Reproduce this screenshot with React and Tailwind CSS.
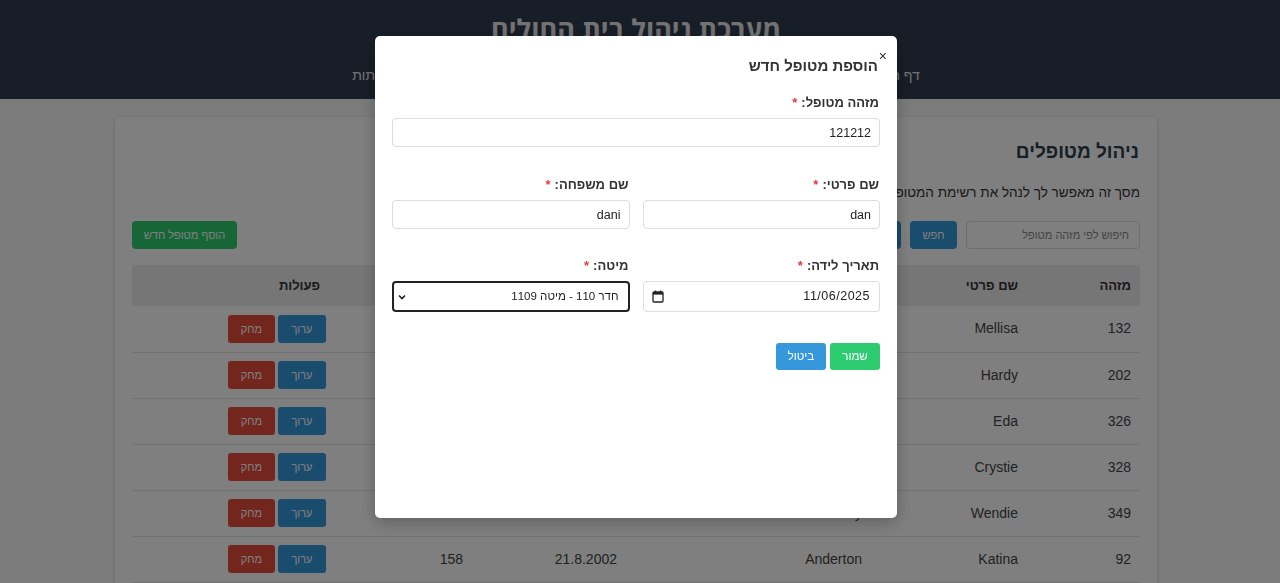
import React from "react";

const rows = [
  { id: 132, first: "Mellisa", last: "Gilbert", dob: "3.4.1985", bed: "101" },
  { id: 202, first: "Hardy", last: "Mason", dob: "17.9.1990", bed: "114" },
  { id: 326, first: "Eda", last: "Hollis", dob: "9.1.1978", bed: "122" },
  { id: 328, first: "Crystie", last: "Warner", dob: "28.5.1966", bed: "130" },
  { id: 349, first: "Wendie", last: "Kennedy", dob: "12.12.1999", bed: "143" },
  { id: 92, first: "Katina", last: "Anderton", dob: "21.8.2002", bed: "158" },
  { id: 95, first: "Lorne", last: "Bishop", dob: "4.2.1981", bed: "160" },
];

const navItems = ["דף ראשי", "ניהול מטופלים", "ניהול רופאים", "ניהול חדרים", "ניהול מיטות", "דוחות", "דלתות"];

function Req() {
  return <span className="text-[#e53935] mr-[4px]">*</span>;
}

function Field({ label, children }) {
  return (
    <div className="flex flex-col">
      <label className="text-[13px] font-bold text-[#333] leading-[18px] mb-[6px] pr-[1px]">
        {label}:<Req />
      </label>
      {children}
    </div>
  );
}

const inputCls = "h-[29px] w-full border border-[#dddddd] rounded-[4px] px-[8px] text-[12.5px] text-[#222] outline-none bg-white";

export default function App() {
  return (
    <div dir="rtl" className="relative min-h-[583px] bg-[#f7f7f7]" style={{ fontFamily: '"Liberation Sans", Arial, "DejaVu Sans", sans-serif' }}>
      {/* Header */}
      <header className="bg-[#2f3d4f] h-[99px]">
        <div className="w-[1272px] mr-auto flex flex-col items-center pt-[12px]">
          <h1 className="text-[27px] leading-[34px] font-bold text-[#e6e6e6]" style={{ fontFamily: '"Open Sans", "Noto Sans", sans-serif' }}>
            מערכת ניהול בית החולים
          </h1>
          <nav className="flex gap-[25px] mt-[19px] text-[14px] text-[#e2e2e2]">
            {navItems.map((n) => (
              <span key={n}>{n}</span>
            ))}
          </nav>
        </div>
      </header>

      {/* Main */}
      <div className="w-[1272px] mr-auto pt-[18px]">
        <div className="w-[1042px] mx-auto bg-white rounded-[6px] shadow-[0_1px_4px_rgba(0,0,0,0.12)] px-[17px] pt-[22px] pb-[20px]">
          <h2 className="text-[19px] leading-[26px] font-bold text-[#2c3e50] pr-[1px]">ניהול מטופלים</h2>
          <p className="text-[13.5px] leading-[20px] text-[#333] mt-[18px]">
            מסך זה מאפשר לך לנהל את רשימת המטופלים בבית החולים
          </p>
          <div className="flex items-center justify-between mt-[18px] h-[28px]">
            <div className="flex items-center gap-[9px]">
              <div className="w-[174px] h-[28px] border border-[#dcdcdc] rounded-[4px] px-[10px] flex items-center text-[11px] text-[#888]">
                חיפוש לפי מזהה מטופל
              </div>
              <button className="h-[28px] w-[47px] rounded-[4px] bg-[#3498db] text-white text-[11px]">חפש</button>
              <button className="h-[28px] px-[14px] rounded-[4px] bg-[#3498db] text-white text-[11px]">הצג הכל</button>
            </div>
            <button className="h-[28px] w-[105px] rounded-[4px] bg-[#2ecc71] text-white text-[11px]">הוסף מטופל חדש</button>
          </div>

          <table className="w-full mt-[16px] border-collapse text-[14px] text-[#444]">
            <thead>
              <tr className="bg-[#ececec] h-[41px] text-right text-[#333]">
                <th className="w-[113px] pr-[9px] font-bold text-[13px]">מזהה</th>
                <th className="w-[156px] pr-[9px] font-bold text-[13px]">שם פרטי</th>
                <th className="w-[245px] pr-[9px] font-bold text-[13px]">שם משפחה</th>
                <th className="w-[154px] pr-[9px] font-bold text-[13px]">תאריך לידה</th>
                <th className="w-[137px] pr-[9px] font-bold text-[13px]">מיטה</th>
                <th className="pr-[15px] font-bold text-[13px]">פעולות</th>
              </tr>
            </thead>
            <tbody>
              {rows.map((r) => (
                <tr key={r.id} className="h-[46px] border-b border-[#e2e2e2] text-right">
                  <td className="pr-[9px]">{r.id}</td>
                  <td className="pr-[9px]">{r.first}</td>
                  <td className="pr-[9px]">{r.last}</td>
                  <td className="pr-[9px]">{r.dob}</td>
                  <td className="pr-[9px]">{r.bed}</td>
                  <td className="pr-[9px]">
                    <div className="flex gap-[3px]">
                      <button className="h-[28px] w-[48px] rounded-[3px] bg-[#3498db] text-white text-[11px]">ערוך</button>
                      <button className="h-[28px] w-[47px] rounded-[3px] bg-[#e74c3c] text-white text-[11px]">מחק</button>
                    </div>
                  </td>
                </tr>
              ))}
            </tbody>
          </table>
        </div>
      </div>

      {/* Overlay + modal */}
      <div className="fixed inset-0 bg-black/50">
        <div className="w-[1272px] mr-auto flex justify-center pt-[36px]">
          <div className="relative w-[522px] h-[482px] bg-white rounded-[5px] shadow-[0_4px_16px_rgba(0,0,0,0.25)] px-[17px] pt-[20px]">
            <span className="absolute right-[10px] top-[13px] text-[14px] leading-[14px] text-[#333]">×</span>
            <h3 className="text-[15px] leading-[20px] font-bold text-[#333] pr-[2px]">הוספת מטופל חדש</h3>

            <div className="mt-[18px]">
              <Field label="מזהה מטופל">
                <input readOnly value="121212" className={inputCls} />
              </Field>
            </div>

            <div className="grid grid-cols-2 gap-[13px] mt-[29px]">
              <Field label="שם פרטי">
                <input readOnly value="dan" className={inputCls} />
              </Field>
              <Field label="שם משפחה">
                <input readOnly value="dani" className={inputCls} />
              </Field>
            </div>

            <div className="grid grid-cols-2 gap-[13px] mt-[28px]">
              <Field label="תאריך לידה">
                <div className="h-[31px] w-full border border-[#dddddd] rounded-[4px] pr-[9px] pl-[8px] flex items-center justify-between text-[12.5px] text-[#222]">
                  <span dir="ltr" className="tracking-[0.5px]">11/06/2025</span>
                  <svg width="12" height="13" viewBox="0 0 12 13">
                    <rect x="1" y="2" width="10" height="10" rx="1" fill="none" stroke="#222" strokeWidth="1.3" />
                    <rect x="1" y="2" width="10" height="2.6" fill="#222" />
                    <line x1="3.5" y1="0.5" x2="3.5" y2="3" stroke="#222" strokeWidth="1.3" />
                    <line x1="8.5" y1="0.5" x2="8.5" y2="3" stroke="#222" strokeWidth="1.3" />
                  </svg>
                </div>
              </Field>
              <Field label="מיטה">
                <div className="h-[31px] w-full border-2 border-[#222] rounded-[4px] pr-[9px] pl-[3px] flex items-center justify-between text-[11.5px] text-[#222]">
                  <span>חדר 110 - מיטה 1109</span>
                  <svg width="10" height="8" viewBox="0 0 10 8">
                    <path d="M2 2.5 L5 5.5 L8 2.5" fill="none" stroke="#222" strokeWidth="1.6" />
                  </svg>
                </div>
              </Field>
            </div>

            <div className="flex gap-[4px] mt-[31px]">
              <button className="h-[27px] w-[50px] rounded-[3px] bg-[#2ecc71] text-white text-[11.5px]">שמור</button>
              <button className="h-[27px] w-[50px] rounded-[3px] bg-[#3498db] text-white text-[11.5px]">ביטול</button>
            </div>
          </div>
        </div>
      </div>
    </div>
  );
}
